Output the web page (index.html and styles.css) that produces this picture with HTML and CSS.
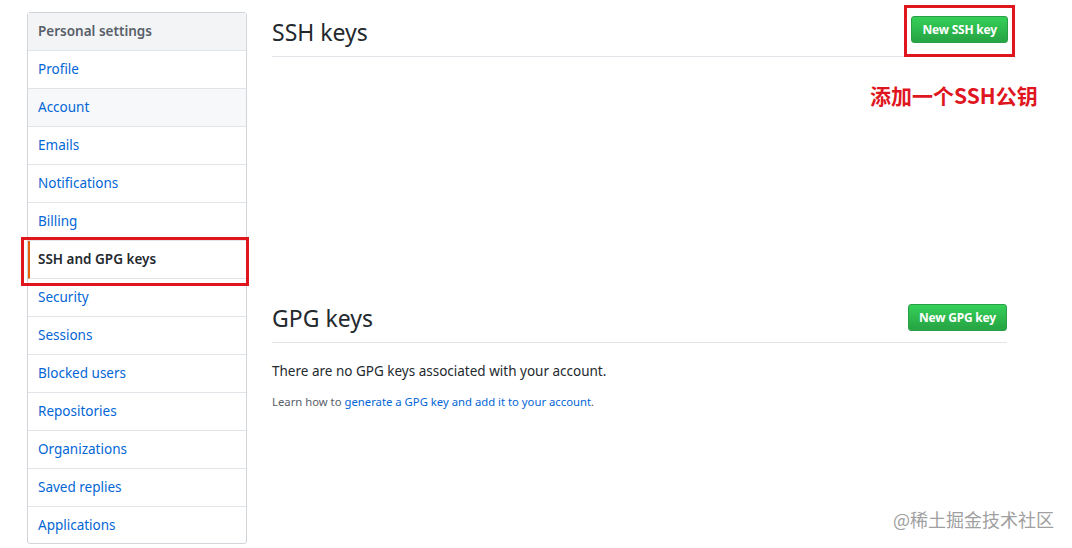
FILE: index.html
```html
<!DOCTYPE html>
<html lang="en">
<head>
<meta charset="utf-8">
<title>SSH and GPG keys</title>
<link rel="stylesheet" href="styles.css">
</head>
<body>
<div class="page">
  <nav class="menu">
    <div class="menu-heading">Personal settings</div>
    <a class="menu-item">Profile</a>
    <a class="menu-item hovered">Account</a>
    <a class="menu-item">Emails</a>
    <a class="menu-item">Notifications</a>
    <a class="menu-item">Billing</a>
    <a class="menu-item selected">SSH and GPG keys<span class="mark mark-menu"></span></a>
    <a class="menu-item">Security</a>
    <a class="menu-item">Sessions</a>
    <a class="menu-item">Blocked users</a>
    <a class="menu-item">Repositories</a>
    <a class="menu-item">Organizations</a>
    <a class="menu-item">Saved replies</a>
    <a class="menu-item last">Applications</a>
  </nav>
  <main class="main">
    <section class="section ssh">
      <div class="subhead">
        <h2 class="subhead-title">SSH keys</h2>
        <span class="btn-wrap"><a class="btn">New SSH key</a><span class="mark mark-btn"></span></span>
      </div>
      <div class="note">添加一个SSH公钥</div>
    </section>
    <section class="section gpg">
      <div class="subhead">
        <h2 class="subhead-title">GPG keys</h2>
        <span class="btn-wrap"><a class="btn btn-gpg">New GPG key</a></span>
      </div>
      <p class="empty">There are no GPG keys associated with your account.</p>
      <p class="help">Learn how to <a class="link">generate a GPG key and add it to your account</a>.</p>
    </section>
  </main>
</div>
<div class="watermark">@稀土掘金技术社区</div>
</body>
</html>
```

FILE: styles.css
```css
html, body {
  margin: 0;
  padding: 0;
  background: #fff;
}
body {
  font-family: "Noto Sans", "Open Sans", "Noto Sans CJK SC", sans-serif;
  color: #24292e;
  width: 1072px;
  height: 548px;
  overflow: hidden;
  position: relative;
}
.page {
  display: flex;
  align-items: flex-start;
  padding: 12px 0 0 27px;
}
.menu {
  width: 218px;
  border: 1px solid #d1d5da;
  border-radius: 3px;
  display: flex;
  flex-direction: column;
  font-size: 13.5px;
}
.menu-heading {
  height: 37px;
  line-height: 37px;
  padding-left: 10px;
  background: #f3f4f6;
  color: #586069;
  font-weight: 600;
  border-bottom: 1px solid #e1e4e8;
}
.menu-item {
  position: relative;
  height: 37px;
  line-height: 37px;
  padding-left: 10px;
  color: #0366d6;
  border-bottom: 1px solid #e1e4e8;
  cursor: pointer;
}
.menu-item.hovered {
  background: #f6f8fa;
}
.menu-item.last {
  border-bottom: 0;
  height: 36px;
}
.menu-item.selected {
  color: #24292e;
  font-weight: 600;
  padding-left: 8px;
  border-left: 2px solid #e36209;
}
.mark {
  position: absolute;
  border: 3px solid #e0161f;
  pointer-events: none;
}
.mark-menu {
  top: -4px;
  left: -9px;
  right: -3px;
  bottom: -8px;
}
.main {
  margin-left: 25px;
  width: 735px;
  position: relative;
}
.subhead {
  display: flex;
  justify-content: space-between;
  align-items: flex-start;
  padding: 4px 0 9px;
  border-bottom: 1px solid #e1e4e8;
}
.subhead-title {
  margin: 1px 0 0;
  font-size: 23px;
  line-height: 30px;
  font-weight: 400;
  color: #24292e;
}
.btn-wrap {
  position: relative;
  display: inline-flex;
}
.btn {
  display: inline-block;
  padding: 3px 10px;
  font-size: 12px;
  line-height: 19px;
  font-weight: 700;
  color: #fff;
  background: linear-gradient(#34d058, #28a745 90%);
  border: 1px solid #2a9d47;
  border-radius: 3px;
  letter-spacing: -0.2px;
}
.ssh .btn-wrap {
  margin-right: -1px;
}
.mark-btn {
  top: -11px;
  left: -7px;
  right: -7px;
  bottom: -14px;
}
.note {
  position: absolute;
  top: 70px;
  left: 598px;
  font-family: "Noto Sans CJK SC", sans-serif;
  font-size: 21px;
  font-weight: 700;
  line-height: 26px;
  color: #e0161f;
  white-space: nowrap;
}
.gpg {
  margin-top: 243px;
}
.gpg .subhead-title {
  margin-top: -1px;
}
.empty {
  margin: 18px 0 0;
  font-size: 13.5px;
  line-height: 21px;
}
.help {
  margin: 11px 0 0;
  font-size: 11.3px;
  line-height: 17px;
  color: #586069;
}
.link {
  color: #0366d6;
}
.watermark {
  position: absolute;
  left: 893px;
  top: 506px;
  font-family: "Noto Sans CJK SC", sans-serif;
  font-size: 18px;
  line-height: 26px;
  color: #a0a0a0;
  white-space: nowrap;
}
```
